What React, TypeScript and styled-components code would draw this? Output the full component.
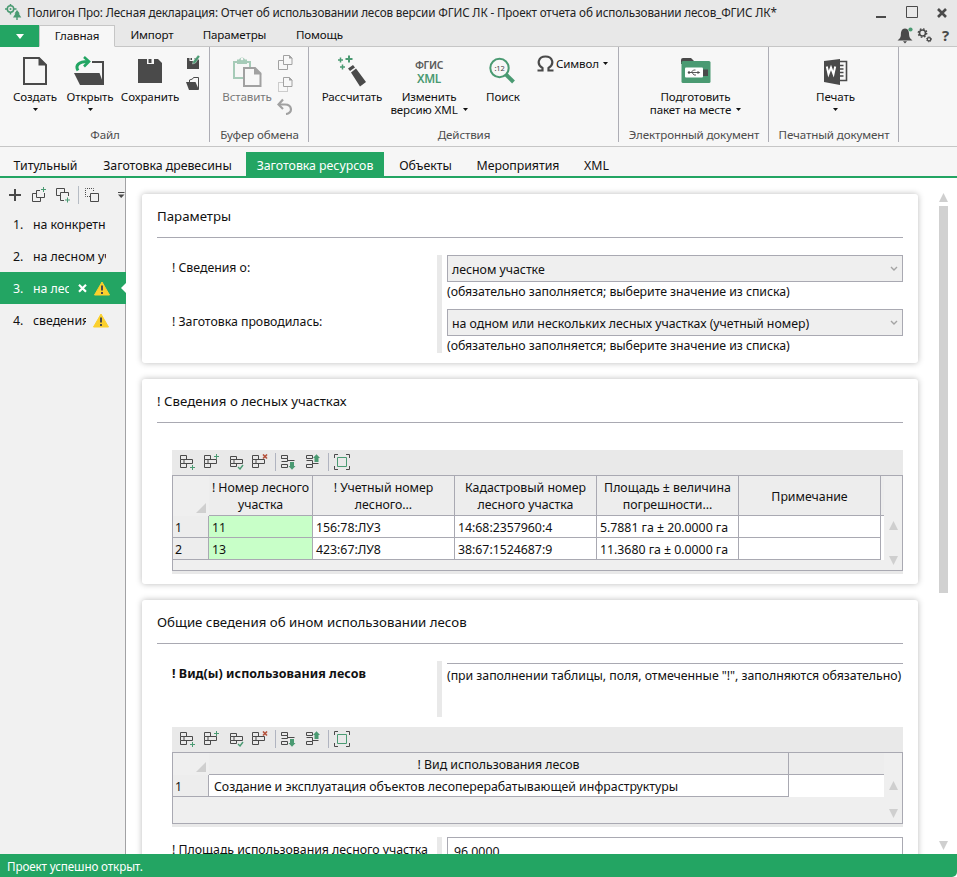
import React, { ReactNode } from 'react';
import styled, { createGlobalStyle, css } from 'styled-components';

const GREEN = '#23a563';
const LEAF = '#4a9a72';
const DARK = '#4a4a4a';
const LINE = '#a9a9b2';

const Global = createGlobalStyle`
  * { box-sizing: border-box; }
  body { margin: 0; background: #fff; }
  svg { display: block; flex: none; }
`;

const Window = styled.div`
  width: 957px;
  height: 877px;
  display: flex;
  flex-direction: column;
  overflow: hidden;
  font-family: 'Noto Sans', 'Open Sans', sans-serif;
  font-size: 12.35px;
  line-height: 17px;
  letter-spacing: -0.03px;
  color: #111;
  background: #fff;
  white-space: nowrap;
`;

/* ---------- title bar ---------- */
const TitleBar = styled.header`
  height: 25px;
  flex: none;
  display: flex;
  align-items: center;
  background: #e8e8e8;
  padding-left: 5px;
`;
const Title = styled.h1`
  margin: 0 auto 1px 5px;
  font-size: 11.7px;
  font-weight: 400;
  letter-spacing: -0.145px;
  color: #222;
`;
const WindowButtons = styled.div`
  display: flex;
  padding-right: 10px;
  gap: 19px;
`;

/* ---------- ribbon tabs ---------- */
const MenuBar = styled.nav`
  height: 22px;
  flex: none;
  display: flex;
  background: #e8e8e8;
  font-size: 11.6px;
  letter-spacing: -0.14px;
`;
const AppMenu = styled.button`
  width: 39px;
  border: 0;
  padding: 0;
  background: ${GREEN};
  display: flex;
  align-items: center;
  justify-content: center;
`;
const MenuTab = styled.div<{ $w: number; $active?: boolean }>`
  width: ${p => p.$w}px;
  text-align: center;
  padding-top: 1px;
  border-bottom: 1px solid #c6c6c6;
  ${p => p.$active && css`
    background: #f7f7f7;
    border: 1px solid #c6c6c6;
    border-bottom-color: #f7f7f7;
  `}
`;
const MenuTools = styled.div`
  flex: 1;
  display: flex;
  justify-content: flex-end;
  align-items: flex-start;
  padding: 2px 4px 0 0;
  gap: 5px;
  border-bottom: 1px solid #c6c6c6;
  & > svg { margin-left: -1px; }
`;

/* ---------- ribbon ---------- */
const Ribbon = styled.section`
  height: 100px;
  flex: none;
  display: flex;
  background: #f7f7f7;
  border-bottom: 1px solid #c6c6c6;
  font-size: 11.6px;
  letter-spacing: -0.14px;
  line-height: 13px;
`;
const Group = styled.div<{ $w: number }>`
  width: ${p => p.$w}px;
  height: 95px;
  flex: none;
  display: flex;
  flex-direction: column;
  border-right: 1px solid #adadb5;
`;
const GroupBody = styled.div<{ $pad: number }>`
  height: 80px;
  padding: 7px 0 0 ${p => p.$pad}px;
  display: flex;
`;
const GroupName = styled.div`
  text-align: center;
  color: #4d4d4d;
  padding: 1px 0 0 1px;
`;
const BigButton = styled.div<{ $w: number; $off?: boolean }>`
  width: ${p => p.$w}px;
  flex: none;
  display: flex;
  flex-direction: column;
  align-items: center;
  color: ${p => (p.$off ? '#777' : '#111')};
`;
const IconSlot = styled.div`
  height: 36px;
  padding-top: 1px;
`;
const Label = styled.div`
  height: 13px;
  display: flex;
  align-items: center;
  gap: 5px;
`;
const SmallColumn = styled.div<{ $w: number }>`
  width: ${p => p.$w}px;
  flex: none;
  display: flex;
  flex-direction: column;
  align-items: center;
  gap: 5px;
`;
const InlineButton = styled.div`
  display: flex;
  height: 18px;
  margin-left: 5px;
  align-items: center;
  gap: 2px;
  & > svg:last-child { margin-left: 2px; }
`;
const XmlMark = styled.div`
  display: grid;
  grid-template-rows: 13px 13px;
  justify-items: center;
  font-size: 10.4px;
  font-weight: 600;
  line-height: 13px;
  letter-spacing: -0.3px;
  padding-top: 4px;
  color: #5a5a5a;
`;
const XmlGreen = styled.span`
  color: ${LEAF};
  font-size: 11.8px;
`;

/* ---------- document tabs ---------- */
const DocTabs = styled.nav`
  height: 31px;
  flex: none;
  display: flex;
  padding-top: 5px;
  background: #f6f6f6;
  border-bottom: 2px solid ${GREEN};
`;
const DocTab = styled.div<{ $w: number; $active?: boolean }>`
  width: ${p => p.$w}px;
  height: 24px;
  padding-top: 5px;
  text-align: center;
  ${p => p.$active && css`background: ${GREEN}; color: #fff;`}
`;

/* ---------- main area ---------- */
const Main = styled.main`
  flex: 1;
  min-height: 0;
  display: flex;
`;
const Sidebar = styled.aside`
  width: 126px;
  flex: none;
  background: #f1f1f1;
  border-right: 1px solid #a2a2a4;
`;
const SideTools = styled.div`
  height: 30px;
  display: flex;
  align-items: center;
  padding: 4px 0 0 9px;
`;
const Gap = styled.i<{ $w: number }>`
  width: ${p => p.$w}px;
  flex: none;
`;
const SideRule = styled.div`
  width: 1px;
  height: 18px;
  margin: 0 6px 0 7px;
  background: #b6bcc4;
`;
const SideItem = styled.div<{ $active?: boolean }>`
  height: 32px;
  display: flex;
  align-items: center;
  padding-left: 13px;
  margin-right: -1px;
  ${p => p.$active && css`background: ${GREEN}; color: #fff;`}
`;
const SideNumber = styled.span`
  width: 20px;
`;
const SideText = styled.span<{ $w: number }>`
  width: ${p => p.$w}px;
  overflow: hidden;
`;
const SideMarks = styled.span<{ $gap: number }>`
  display: flex;
  align-items: center;
  margin-left: ${p => p.$gap}px;
  gap: 7px;
`;
const Notch = styled.svg`
  margin-left: auto;
`;
const Scroller = styled.div`
  flex: 1;
  min-width: 0;
  overflow: hidden;
  padding: 16px 0 0 16px;
`;
const Card = styled.section<{ $h: number }>`
  width: 776px;
  height: ${p => p.$h}px;
  margin-bottom: 16px;
  padding: 0 15px;
  border-radius: 3px;
  background: #fff;
  box-shadow: 0 0 6px rgba(0, 0, 0, 0.27);
`;
const CardTitle = styled.h2`
  height: 44px;
  margin: 0;
  padding-top: 14px;
  font-size: 13.25px;
  font-weight: 400;
  letter-spacing: 0;
  border-bottom: 1px solid ${LINE};
`;
const Fields = styled.div<{ $h: number }>`
  display: grid;
  grid-template-columns: 265px 5px 456px;
  grid-template-rows: 100%;
  height: ${p => p.$h}px;
  margin: 17px 0 0 15px;
`;
const NextFields = styled(Fields)`
  margin-top: 10px;
`;
const Divider = styled.div`
  background: #e9e9e9;
`;
const LabelColumn = styled.div`
  display: grid;
  align-content: start;
  grid-auto-rows: 54px;
  padding-top: 4px;
`;
const FieldLabel = styled.div<{ $bold?: boolean }>`
  font-weight: ${p => (p.$bold ? 700 : 400)};
  ${p => p.$bold && css`font-size: 12.5px; letter-spacing: 0.03px;`}
`;
const ValueColumn = styled.div`
  padding-left: 5px;
  width: 461px;
`;
const Select = styled.div`
  height: 27px;
  display: flex;
  align-items: center;
  justify-content: space-between;
  padding: 1px 4px 0;
  border: 1px solid ${LINE};
  background: #efefef;
`;
const Hint = styled.div`
  height: 27px;
  padding-top: 1px;
  letter-spacing: -0.07px;
`;
const RuledHint = styled.div`
  margin-top: 2px;
  padding-top: 3px;
  border-top: 1px solid ${LINE};
  letter-spacing: -0.045px;
`;
const TextInput = styled.div`
  height: 27px;
  padding: 5px 6px;
  border: 1px solid ${LINE};
`;

/* ---------- tables ---------- */
const TableBlock = styled.div<{ $top: number }>`
  width: 731px;
  margin: ${p => p.$top}px 0 0 15px;
  background: #e9e9e9;
  padding-bottom: 3px;
`;
const TableTools = styled.div`
  height: 25px;
  display: flex;
  align-items: flex-start;
  padding: 4px 0 0 8px;
`;
const Tool = styled.span<{ $gap?: number }>`
  margin-right: ${p => p.$gap ?? 8}px;
`;
const ToolRule = styled.div`
  width: 1px;
  height: 18px;
  margin-right: 5px;
  margin-top: -1px;
  background: #b0b4c0;
`;
const TableFrame = styled.div<{ $h: number }>`
  height: ${p => p.$h}px;
  display: flex;
  border: 1px solid ${LINE};
  background: #efefef;
`;
const Grid = styled.div<{ $cols: string; $rows: string }>`
  width: 711px;
  flex: none;
  display: grid;
  align-content: start;
  grid-template-columns: ${p => p.$cols};
  grid-template-rows: ${p => p.$rows};
`;
const Corner = styled.div`
  display: flex;
  align-items: flex-end;
  justify-content: flex-end;
  padding: 0 3px 3px;
`;
const Head = styled.div<{ $last?: boolean; $drop?: number }>`
  display: flex;
  align-items: center;
  justify-content: center;
  text-align: center;
  padding-top: ${p => p.$drop ?? 0}px;
  background: #ededed;
  border-bottom: 1px solid ${LINE};
  border-right: ${p => (p.$last ? '0' : `1px solid ${LINE}`)};
`;
const RowHead = styled.div`
  background: #ededed;
  border-right: 1px solid ${LINE};
  border-bottom: 1px solid ${LINE};
  padding: 3px 0 0 2px;
`;
const Cell = styled.div<{ $key?: boolean; $pad?: number }>`
  background: ${p => (p.$key ? '#c8ffc8' : '#fff')};
  border-right: 1px solid ${LINE};
  border-bottom: 1px solid ${LINE};
  padding: 3px 0 0 ${p => p.$pad ?? 3}px;
`;
const Blank = styled.div`
  background: #fff;
`;
const TableScroll = styled.div<{ $top: number }>`
  flex: 1;
  display: flex;
  flex-direction: column;
  align-items: center;
  justify-content: space-between;
  padding: ${p => p.$top}px 0 5px;
`;

/* ---------- page scroll bar ---------- */
const PageScroll = styled.div`
  width: 27px;
  flex: none;
  display: flex;
  flex-direction: column;
  align-items: center;
  padding: 15px 0 4px;
`;
const Thumb = styled.div`
  width: 9px;
  height: 387px;
  margin: 4px 0 auto;
  background: #d1d1d1;
`;

const StatusBar = styled.footer`
  height: 23px;
  flex: none;
  padding: 4px 7px 0;
  font-size: 11.7px;
  letter-spacing: -0.14px;
  color: #fff;
  background: ${GREEN};
  border-bottom-right-radius: 5px;
`;

/* ---------- icons ---------- */
const Svg = ({ w, h = w, children }: { w: number; h?: number; children: ReactNode }) => (
  <svg width={w} height={h} viewBox={`0 0 ${w} ${h}`} fill="none">{children}</svg>
);
const Down = () => <Svg w={5} h={3}><path d="M0 0h5L2.500 3z" fill="#111" /></Svg>;
const Tri = ({ up }: { up?: boolean }) => (
  <Svg w={9}><path d={up ? 'M4.500 0 9 9H0z' : 'M0 0h9L4.500 9z'} fill="#cfcfcf" /></Svg>
);

const Logo = () => (
  <Svg w={17} h={18}>
    <g stroke={LEAF} strokeWidth="1.500">
      <circle cx="5.500" cy="5" r="3.200" />
      <path d="M5.500 0v2M5.500 8v2.500M0 5h2.500M8.500 5h3" />
    </g>
    <circle cx="5.500" cy="5" r="1" fill={LEAF} />
    <path d="m12 6 2.800 3.600h-1l2.500 3.900h-3.600V16h-1.400v-2.500H8l2.500-3.900h-1z" fill={LEAF} />
  </Svg>
);
const Create = () => (
  <Svg w={36}>
    <path d="M7 3h15l7 7v19H7z" stroke={DARK} strokeWidth="2" />
    <path d="M21.500 2v8.500H30z" fill={DARK} />
  </Svg>
);
const Open = () => (
  <Svg w={36}>
    <path d="M2 18h25.500L32 30H8z" fill={DARK} />
    <path d="M20 7h11v23" stroke={DARK} strokeWidth="2" />
    <path d="M6 15.500C3 10.500 6.500 6.500 16 6.500" stroke={GREEN} strokeWidth="3" />
    <path d="m12 2 5 4.500-5 5" stroke={GREEN} strokeWidth="2.600" />
  </Svg>
);
const Save = () => (
  <Svg w={36}>
    <path d="M6 4h20l4 4v20H6z" fill={DARK} />
    <path d="M15 4h7v5h-7z" fill="#f7f7f7" />
    <path d="M16.500 4h3v4h-3z" fill={DARK} />
  </Svg>
);
const SaveAs = () => (
  <Svg w={16}>
    <path d="M2 4h2.500v3h5V4H12l2 2v9H2z" fill={DARK} />
    <path d="M5.500 4h1.500v2H5.500z" fill={DARK} />
    <path d="m13 1 2 1.500-4.500 6.500-3 1 .7-2.800z" fill={LEAF} stroke="#f7f7f7" strokeWidth=".4" />
  </Svg>
);
const Folder = () => (
  <Svg w={16}>
    <path d="M4.500 7V5l3-1 1-1.500h5V14" stroke={DARK} />
    <path d="M1 7h9.500l3.500 8H4z" fill={DARK} />
  </Svg>
);
const Paste = () => (
  <Svg w={36}>
    <path d="M14 23H5V7h16v5" stroke="#a6cbb8" strokeWidth="2" />
    <path d="M8 9V4.500h2a3.300 3.300 0 0 1 6 0h2V9z" fill="#a6cbb8" />
    <circle cx="13" cy="4" r="1.300" fill="#f7f7f7" />
    <path d="M15 13h11l5.500 5.500V31H15z" fill="#f7f7f7" stroke="#a1a1a1" strokeWidth="2" />
    <path d="M25 12v7.500h7.500z" fill="#a1a1a1" />
  </Svg>
);
const Copy = ({ dashed }: { dashed?: boolean }) => (
  <Svg w={16} h={17}>
    <path d="M6.500 6.500h-5v9h9V11" stroke="#a1a1a1" strokeDasharray={dashed ? '1 1' : undefined} />
    <path d="M6.500 1.500h6l2.500 2.500v6.500H6.500z" stroke="#a1a1a1" fill="#f7f7f7" />
    <path d="M12 1v3.500h3.500z" fill="#a1a1a1" />
  </Svg>
);
const Undo = () => (
  <Svg w={16} h={17}>
    <path d="M2 6.500h6c7.500 0 8 9 1 9.500" stroke="#a1a1a1" strokeWidth="2.200" />
    <path d="M6 1.500 1.500 6.500 6 11" stroke="#a1a1a1" strokeWidth="2.200" />
  </Svg>
);
const Wand = () => (
  <Svg w={36}>
    <path d="M15 .5v7M11.500 4h7" stroke={LEAF} strokeWidth="2" />
    <path d="M6.500 2.500v5M4 5h5M8.500 9.500v5M6 12h5" stroke={LEAF} strokeWidth="1.500" />
    <path d="m14 13.500 5-3.500 2 2.500-5 3.500zM17 17.500l5-4L32 27l-6 4.500z" fill={DARK} />
  </Svg>
);
const Search = () => (
  <Svg w={36}>
    <circle cx="14.500" cy="13" r="9.200" stroke={LEAF} strokeWidth="2" />
    <path d="m21 19.500 7.500 7.500" stroke={LEAF} strokeWidth="4" />
    <text x="14.500" y="16" fontSize="7.500" textAnchor="middle" fill="#444" letterSpacing="-.2">:12</text>
  </Svg>
);
const Omega = () => (
  <Svg w={17} h={17}>
    <path d="M.5 15.500h5V13C-1 9 1.500 1.500 8.500 1.500S18 9 11.500 13v2.500h5" stroke={DARK} strokeWidth="2.200" />
  </Svg>
);
const Usb = () => (
  <Svg w={36}>
    <path d="M3 5q0-2 2-2h8l3 3v3H3z" fill={DARK} />
    <rect x="3.500" y="6" width="29" height="22" rx="1.500" fill={LEAF} />
    <rect x="7" y="12.500" width="18" height="10" rx="1" fill="#fff" />
    <path d="M25 14.500h5v6.500h-5z" fill={DARK} />
    <path d="M10 17.500h11M13 17.500l2.500-2.500h2M14 17.500l2 2.500h2" stroke={DARK} strokeWidth=".9" />
    <circle cx="11" cy="17.500" r="1.200" fill={DARK} />
    <path d="m19.500 15.900 2.800 1.600-2.800 1.600z" fill={DARK} />
  </Svg>
);
const Word = () => (
  <Svg w={36}>
    <path d="M21 6.500h7.500v19H21M22 10.500h3.500M22 14h3.500M22 17.500h3.500M22 21h3.500" stroke={DARK} strokeWidth="1.600" />
    <path d="m6 6 16-2v26L6 27z" fill={DARK} />
    <path d="m8.800 11.500 1.700 7.500 2.500-6.500 2.500 6.500 1.700-7.500" stroke="#fff" strokeWidth="2" />
  </Svg>
);
const Bell = () => (
  <Svg w={16} h={17}>
    <path d="M8 1.500C4 2 4 5 3.800 8.500 3.600 11 2.500 11.500.5 13.500h15C13.500 11.500 12.400 11 12.200 8.500 12 5 12 2 8 1.500zM6 14.300h4L8 16.500z" fill={DARK} />
    <circle cx="13.500" cy="2.500" r="2.100" fill={LEAF} />
  </Svg>
);
const Gears = () => (
  <Svg w={16} h={17}>
    <circle cx="5.500" cy="6" r="3" stroke={DARK} strokeWidth="1.600" />
    <circle cx="5.500" cy="6" r="4.200" stroke={DARK} strokeWidth="1.400" strokeDasharray="1.650 1.650" />
    <circle cx="12" cy="12.300" r="1.700" stroke={DARK} strokeWidth="1.300" />
    <circle cx="12" cy="12.300" r="2.500" stroke={DARK} strokeDasharray="1 1" />
  </Svg>
);
const Help = styled.b`
  width: 15px;
  padding-left: 4px;
  font-size: 15px;
  line-height: 17px;
  color: ${DARK};
`;
const Warn = () => (
  <Svg w={16} h={15}>
    <path d="M8 1 15.500 14H.5z" fill="#fbd02d" stroke="#fbd02d" strokeLinejoin="round" />
    <path d="M8 4.500v5M8 11v2" stroke={DARK} strokeWidth="2" />
  </Svg>
);

const Rows = () => (
  <path d="M.5 1.500h6v4h-6zM.5 9.500h6v4h-6zM.5 5.500v4M4 5.500h8.500v4H4z" stroke={DARK} />
);
const toolIcons = [
  <Svg w={16}><Rows /><path d="M12.500 11v5M10 13.500h5" stroke={LEAF} /></Svg>,
  <Svg w={16}><Rows /><path d="M12.500 0v5M10 2.500h5" stroke={LEAF} /></Svg>,
  <Svg w={16}>
    <path d="M1.500 2.500h6v3h-6zM1.500 9.500h6v3h-6zM1.500 5.500v4M5 5.500h8.500v4H5z" stroke={DARK} />
    <path d="m9 13 2 2 3-4" stroke={LEAF} strokeWidth="1.400" />
  </Svg>,
  <Svg w={16}><Rows /><path d="m11 .5 4 4m0-4-4 4" stroke="#b5523c" strokeWidth="1.600" /></Svg>,
  <Svg w={16}>
    <path d="M.5 1.500h6v3h-6zM.5 10.500h6v3h-6zM.5 4.500h6v3h-6M6.500 6.500h7" stroke={DARK} />
    <path d="M9 8h4v4h1.500L11 15.800 7.500 12H9z" fill={LEAF} />
  </Svg>,
  <Svg w={16}>
    <path d="M1.500 1.500h6v3h-6zM1.500 10.500h6v3h-6zM1.500 6.500h6v4M7.500 9.500h6" stroke={DARK} />
    <path d="M9.500 8h4V4H15L11.500.2 8 4h1.500z" fill={LEAF} />
  </Svg>,
  <Svg w={16}>
    <path d="M4 .5H.5V4M12 .5h3.500V4M4 15.500H.5V12M12 15.500h3.500V12" stroke={DARK} />
    <path d="M3.500 3.500h9v9h-9z" stroke={LEAF} />
  </Svg>,
];
const TableToolbar = () => (
  <TableTools>
    <Tool>{toolIcons[0]}</Tool>
    <Tool $gap={9}>{toolIcons[1]}</Tool>
    <Tool $gap={7}>{toolIcons[2]}</Tool>
    <Tool $gap={7}>{toolIcons[3]}</Tool>
    <ToolRule />
    <Tool>{toolIcons[4]}</Tool>
    <Tool $gap={7}>{toolIcons[5]}</Tool>
    <ToolRule />
    <Tool>{toolIcons[6]}</Tool>
  </TableTools>
);
const CornerMark = () => <Svg w={10}><path d="M10 0v10H0z" fill="#cfcfcf" /></Svg>;
const Chevron = () => <Svg w={8} h={9}><path d="m1 2 3 3 3-3" stroke="#a4a4a4" strokeWidth="1.400" /></Svg>;

const parcels = [
  ['11', '156:78:ЛУ3', '14:68:2357960:4', '5.7881 га ± 20.0000 га', ''],
  ['13', '423:67:ЛУ8', '38:67:1524687:9', '11.3680 га ± 0.0000 га', ''],
];

export default function App() {
  return (
    <Window>
      <Global />
      <TitleBar>
        <Logo />
        <Title>Полигон Про: Лесная декларация: Отчет об использовании лесов версии ФГИС ЛК - Проект отчета об использовании лесов_ФГИС ЛК*</Title>
        <WindowButtons>
          <Svg w={11} h={14}><path d="M0 11h10" stroke={DARK} strokeWidth="2" /></Svg>
          <Svg w={12} h={14}><path d="M.5.500h11v11H.5z" stroke={DARK} /></Svg>
          <Svg w={10} h={14}><path d="m1 3 8 8m0-8-8 8" stroke={DARK} strokeWidth="2.600" /></Svg>
        </WindowButtons>
      </TitleBar>
      <MenuBar>
        <AppMenu><Svg w={8} h={5}><path d="M0 0h8L4 5z" fill="#fff" /></Svg></AppMenu>
        <MenuTab $w={76} $active>Главная</MenuTab>
        <MenuTab $w={74}>Импорт</MenuTab>
        <MenuTab $w={91}>Параметры</MenuTab>
        <MenuTab $w={79}>Помощь</MenuTab>
        <MenuTools><Bell /><Gears /><Help>?</Help></MenuTools>
      </MenuBar>

      <Ribbon>
        <Group $w={210}>
          <GroupBody $pad={8}>
            <BigButton $w={54}><IconSlot><Create /></IconSlot><Label>Создать</Label><Label><Down /></Label></BigButton>
            <BigButton $w={56}><IconSlot><Open /></IconSlot><Label>Открыть</Label><Label><Down /></Label></BigButton>
            <BigButton $w={64}><IconSlot><Save /></IconSlot><Label>Сохранить</Label></BigButton>
            <SmallColumn $w={21}><SaveAs /><Folder /></SmallColumn>
          </GroupBody>
          <GroupName>Файл</GroupName>
        </Group>
        <Group $w={99}>
          <GroupBody $pad={11}>
            <BigButton $w={52} $off><IconSlot><Paste /></IconSlot><Label>Вставить</Label></BigButton>
            <SmallColumn $w={24}><Copy /><Copy dashed /><Undo /></SmallColumn>
          </GroupBody>
          <GroupName>Буфер обмена</GroupName>
        </Group>
        <Group $w={310}>
          <GroupBody $pad={11}>
            <BigButton $w={64}><IconSlot><Wand /></IconSlot><Label>Рассчитать</Label></BigButton>
            <BigButton $w={90}>
              <IconSlot><XmlMark><span>ФГИС</span><XmlGreen>XML</XmlGreen></XmlMark></IconSlot>
              <Label>Изменить</Label><Label>версию XML <Down /></Label>
            </BigButton>
            <BigButton $w={58}><IconSlot><Search /></IconSlot><Label>Поиск</Label></BigButton>
            <InlineButton><Omega />Символ <Down /></InlineButton>
          </GroupBody>
          <GroupName>Действия</GroupName>
        </Group>
        <Group $w={150}>
          <GroupBody $pad={2}>
            <BigButton $w={149}><IconSlot><Usb /></IconSlot><Label>Подготовить</Label><Label>пакет на месте <Down /></Label></BigButton>
          </GroupBody>
          <GroupName>Электронный документ</GroupName>
        </Group>
        <Group $w={130}>
          <GroupBody $pad={2}>
            <BigButton $w={129}><IconSlot><Word /></IconSlot><Label>Печать</Label><Label><Down /></Label></BigButton>
          </GroupBody>
          <GroupName>Печатный документ</GroupName>
        </Group>
      </Ribbon>

      <DocTabs>
        <DocTab $w={91}>Титульный</DocTab>
        <DocTab $w={153}>Заготовка древесины</DocTab>
        <Gap $w={2} />
        <DocTab $w={138} $active>Заготовка ресурсов</DocTab>
        <DocTab $w={83}>Объекты</DocTab>
        <DocTab $w={102}>Мероприятия</DocTab>
        <DocTab $w={55}>XML</DocTab>
      </DocTabs>

      <Main>
        <Sidebar>
          <SideTools>
            <Svg w={13} h={16}><path d="M6 2v12M0 8h12" stroke={DARK} strokeWidth="2" /></Svg>
            <Gap $w={9} />
            <Svg w={16}>
              <path d="M5 6.500H1.500v8h8V11" stroke={DARK} />
              <path d="M9 3.500H5.500v7h8V6" stroke={DARK} />
              <path d="M12.500 0v5M10 2.500h5" stroke={LEAF} />
            </Svg>
            <Gap $w={8} />
            <Svg w={16}>
              <path d="M5 8.500H1.500v-7h8V5" stroke={DARK} />
              <path d="M9 13.500H5.500v-8h8V9" stroke={DARK} />
              <path d="M12.500 10.500v5M10 13h5" stroke={LEAF} />
            </Svg>
            <SideRule />
            <Svg w={15} h={16}>
              <path d="M5 9.500H.5v-8h8V5" stroke={DARK} strokeDasharray="1 1" />
              <path d="M5.500 6.500h8v8h-8z" stroke={DARK} />
            </Svg>
            <Gap $w={18} />
            <Svg w={7} h={7}><path d="M0 .5h6.500" stroke={DARK} /><path d="M0 2.500h6.500L3.200 6z" fill={DARK} /></Svg>
          </SideTools>
          <SideItem><SideNumber>1.</SideNumber><SideText $w={74}>на конкретн</SideText></SideItem>
          <SideItem><SideNumber>2.</SideNumber><SideText $w={73}>на лесном уч</SideText></SideItem>
          <SideItem $active>
            <SideNumber>3.</SideNumber><SideText $w={36}>на лес</SideText>
            <SideMarks $gap={9}>
              <Svg w={9}><path d="m1 .8 7 7m0-7-7 7" stroke="#fff" strokeWidth="2.200" /></Svg>
              <Warn />
            </SideMarks>
            <Notch width="5" height="10" viewBox="0 0 5 10"><path d="M5 0v10L0 5z" fill="#fff" /></Notch>
          </SideItem>
          <SideItem>
            <SideNumber>4.</SideNumber><SideText $w={53}>сведения</SideText>
            <SideMarks $gap={7}><Warn /></SideMarks>
          </SideItem>
        </Sidebar>

        <Scroller>
          <Card $h={169}>
            <CardTitle>Параметры</CardTitle>
            <Fields $h={98}>
              <LabelColumn>
                <FieldLabel>! Сведения о:</FieldLabel>
                <FieldLabel>! Заготовка проводилась:</FieldLabel>
              </LabelColumn>
              <Divider />
              <ValueColumn>
                <Select>лесном участке<Chevron /></Select>
                <Hint>(обязательно заполняется; выберите значение из списка)</Hint>
                <Select>на одном или нескольких лесных участках (учетный номер)<Chevron /></Select>
                <Hint>(обязательно заполняется; выберите значение из списка)</Hint>
              </ValueColumn>
            </Fields>
          </Card>

          <Card $h={205}>
            <CardTitle>! Сведения о лесных участках</CardTitle>
            <TableBlock $top={27}>
              <TableToolbar />
              <TableFrame $h={96}>
                <Grid $cols="36px 104px repeat(4, 142px) 3px" $rows="40px 22px 22px">
                  <Corner><CornerMark /></Corner>
                  <Head>! Номер лесного<br />участка</Head>
                  <Head>! Учетный номер<br />лесного...</Head>
                  <Head>Кадастровый номер<br />лесного участка</Head>
                  <Head>Площадь ± величина<br />погрешности...</Head>
                  <Head $drop={2}>Примечание</Head>
                  <Head $last />
                  {parcels.map((row, i) => (
                    <React.Fragment key={i}>
                      <RowHead>{i + 1}</RowHead>
                      {row.map((v, j) => <Cell key={j} $key={j === 0}>{v}</Cell>)}
                      <Blank />
                    </React.Fragment>
                  ))}
                </Grid>
                <TableScroll $top={45}><Tri up /><Tri /></TableScroll>
              </TableFrame>
            </TableBlock>
          </Card>

          <Card $h={420}>
            <CardTitle>Общие сведения об ином использовании лесов</CardTitle>
            <Fields $h={56}>
              <LabelColumn><FieldLabel $bold>! Вид(ы) использования лесов</FieldLabel></LabelColumn>
              <Divider />
              <ValueColumn>
                <RuledHint>(при заполнении таблицы, поля, отмеченные "!", заполняются обязательно)</RuledHint>
              </ValueColumn>
            </Fields>
            <TableBlock $top={10}>
              <TableToolbar />
              <TableFrame $h={72}>
                <Grid $cols="36px 580px 95px" $rows="22px 22px">
                  <Corner><CornerMark /></Corner>
                  <Head $drop={2}>! Вид использования лесов</Head>
                  <Head $last />
                  <RowHead>1</RowHead>
                  <Cell $pad={5}>Создание и эксплуатация объектов лесоперерабатывающей инфраструктуры</Cell>
                  <Blank />
                </Grid>
                <TableScroll $top={28}><Tri up /><Tri /></TableScroll>
              </TableFrame>
            </TableBlock>
            <NextFields $h={60}>
              <LabelColumn><FieldLabel>! Площадь использования лесного участка</FieldLabel></LabelColumn>
              <Divider />
              <ValueColumn><TextInput>96.0000</TextInput></ValueColumn>
            </NextFields>
          </Card>
        </Scroller>
        <PageScroll><Tri up /><Thumb /><Tri /></PageScroll>
      </Main>
      <StatusBar>Проект успешно открыт.</StatusBar>
    </Window>
  );
}
